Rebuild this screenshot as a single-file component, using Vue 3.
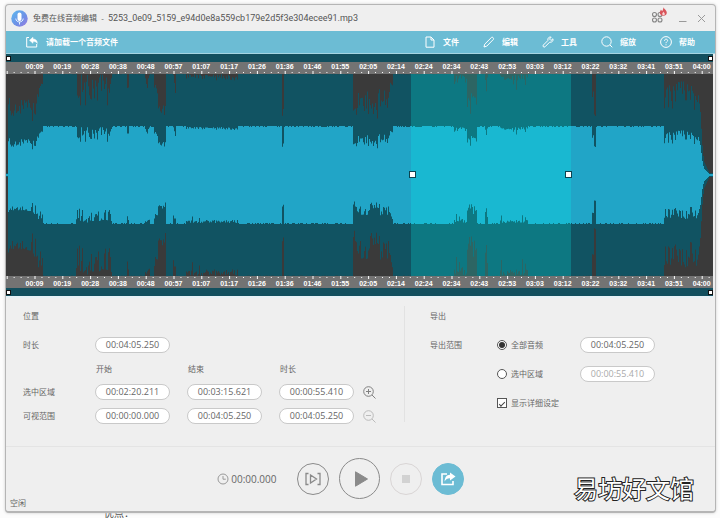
<script setup>
import { ref, reactive } from 'vue';

const fileName = ref('5253_0e09_5159_e94d0e8a559cb179e2d5f3e304ecee91.mp3');
const exportRange = ref('all');
const showDetails = ref(true);

const menu = [
  { icon: 'file', label: '文件' },
  { icon: 'edit', label: '编辑' },
  { icon: 'tool', label: '工具' },
  { icon: 'zoom', label: '缩放' },
  { icon: 'help', label: '帮助' },
];

const times = reactive({
  total: '00:04:05.250',
  selStart: '00:02:20.211',
  selEnd: '00:03:15.621',
  selLength: '00:00:55.410',
  viewStart: '00:00:00.000',
  viewEnd: '00:04:05.250',
  viewLength: '00:04:05.250',
  exportAll: '00:04:05.250',
  exportSel: '00:00:55.410',
});

// waveform size in drawing units
const W = 707;
const H = 202;
const MID = 101;
const BODY = 49;

const pct = (x) => (x / W) * 100 + '%';

// ruler
const labels = [
  '00:09', '00:19', '00:28', '00:38', '00:48', '00:57', '01:07', '01:17', '01:26',
  '01:36', '01:46', '01:55', '02:05', '02:14', '02:24', '02:34', '02:43', '02:53',
  '03:03', '03:12', '03:22', '03:32', '03:41', '03:51', '04:00',
].map((text, i) => ({ text, x: pct(28.5 + i * 27.8) }));

const ticks = [];
for (let i = 0; i < 102; i++) {
  ticks.push({ x: pct(0.7 + i * 6.95), major: i % 4 === 0 });
}

// quiet passages: [from, to, smallest dip, largest dip, density]
const quiet = [
  [0, 4, 12, 16, 1],
  [4, 16, 13, 22, 1],
  [16, 26, 13, 18, 1],
  [26, 32, 10, 24, 1],
  [32, 37, 5, 15, 1],
  [70, 80, 3, 16, 0.8],
  [80, 94, 3, 14, 0.7],
  [94, 106, 3, 18, 0.8],
  [121, 123, 4, 8, 0.6],
  [139, 144, 2, 15, 0.8],
  [148, 152, 5, 12, 1],
  [152, 160, 15, 23, 1],
  [167, 170, 5, 17, 0.8],
  [180, 206, 1, 9, 0.25],
  [206, 232, 1, 4, 0.2],
  [276, 278, 17, 22, 1],
  [347, 351, 17, 25, 1],
  [351, 364, 9, 20, 1],
  [364, 372, 14, 23, 1],
  [372, 384, 8, 20, 1],
  [384, 387, 5, 11, 1],
  [448, 461, 1, 10, 0.6],
  [461, 471, 10, 20, 1],
  [479, 482, 6, 17, 0.9],
  [494, 522, 1, 9, 0.25],
  [586, 588, 8, 14, 1],
  [588, 590, 20, 27, 1],
  [658, 670, 6, 18, 1],
  [670, 678, 4, 14, 1],
  [678, 692, 5, 18, 1],
];

const fade = [38, 34, 30, 22, 14, 9, 6, 5, 4, 3, 2, 1, 1, 1, 1];
const fadeStart = W - fade.length;

const makeEnvelope = (seed) => {
  let s = seed;
  const rand = () => {
    s = (s * 16807) % 2147483647;
    return s / 2147483647;
  };
  const env = [];
  for (let x = 0; x < W; x++) {
    if (x < 2) { rand(); env.push(1); continue; }
    if (x >= fadeStart) { env.push(fade[x - fadeStart]); continue; }
    const part = quiet.find((q) => x >= q[0] && x < q[1]);
    let dip = rand() < 0.3 ? 1 : 0;
    if (part && rand() < part[4]) {
      dip = part[2] + (part[3] - part[2]) * Math.pow(rand(), 1.3);
    } else if (part) {
      dip = 1 + rand() * 3;
    }
    env.push(BODY - dip);
  }
  return env;
};

const upper = makeEnvelope(4711);
const lower = makeEnvelope(9203);

const toPath = (gain) => {
  const amp = (v) => Math.min(v * gain, MID + 2);
  let d = `M0 ${MID}`;
  upper.forEach((v, x) => { d += `V${(MID - amp(v)).toFixed(1)}H${x + 1}`; });
  for (let x = W - 1; x >= 0; x--) {
    d += `V${(MID + amp(lower[x])).toFixed(1)}H${x}`;
  }
  return d + 'Z';
};

const bodyPath = toPath(1);
const peakPath = toPath(2.1);
</script>

<template>
  <main class="page">
    <div class="window">
      <header class="titlebar">
        <svg class="logo" viewBox="0 0 17 17">
          <defs>
            <linearGradient id="logoFill" x1="0" y1="0" x2="1" y2="1">
              <stop offset="0" stop-color="#5cb9ee" />
              <stop offset="0.6" stop-color="#6f8fe6" />
              <stop offset="1" stop-color="#9a7be0" />
            </linearGradient>
          </defs>
          <circle cx="8.500" cy="8.500" r="8.200" fill="url(#logoFill)" />
          <rect x="6.500" y="2.500" width="4" height="8.500" rx="2" fill="#fff" />
          <path d="M4.800 8.500c0 4.600 7.400 4.600 7.400 0M8.500 12v2.500" fill="none" stroke="#e4f1ff" stroke-width="1" />
        </svg>
        <h1>免费在线音频编辑 &nbsp;-&nbsp; <span>{{ fileName }}</span></h1>
        <div class="win-buttons">
          <button aria-label="apps">
            <svg class="apps" viewBox="0 0 17 17">
              <g fill="none" stroke="#858585" stroke-width="1.100">
                <circle cx="3.500" cy="8.500" r="2" /><circle cx="9" cy="8.500" r="2" />
                <circle cx="3.500" cy="14" r="2" /><circle cx="9" cy="14" r="2" />
              </g>
              <path d="M12.300 1c.5 1.800 3.500 3 3.500 5.700 0 2-1.500 3-3.400 3S8.800 8.500 8.800 6.800c0-1.300.8-2 1-3 .8.400 1 .9 1.200 1.500C11.900 4.200 12.600 2.600 12.300 1z" fill="#d9545a" />
              <path d="M12.500 5.500c.2 1 1.300 1.300 1.300 2.500 0 .8-.6 1.200-1.300 1.200s-1.300-.4-1.300-1.200c0-.9.900-1.300 1.300-2.500z" fill="#f6d5d5" />
            </svg>
          </button>
          <button aria-label="minimize">
            <svg class="small" viewBox="0 0 9 9"><path d="M1 7.500h7.500" stroke="#999" stroke-width="1" /></svg>
          </button>
          <button aria-label="close">
            <svg class="small" viewBox="0 0 9 9"><path d="M1 1l7 7M8 1l-7 7" stroke="#999" stroke-width="1" /></svg>
          </button>
        </div>
      </header>

      <nav class="menubar">
        <button class="load">
          <svg class="icon" viewBox="0 0 12 12">
            <path d="M3 1.500H.7v9.500h10V8" />
            <path d="M3.500 4.300L7 1.300v1.700c2.800.1 4.300 1.500 4.300 4.400C10.300 5.900 9 5.500 7 5.600v1.700z" fill="#fff" stroke-width="0.500" />
          </svg>
          请加载一个音频文件
        </button>
        <button v-for="item in menu" :key="item.icon">
          <svg class="icon" viewBox="0 0 12 12">
            <path v-if="item.icon === 'file'" d="M2 1h5l3 3v7.200H2zM7 1v3h3" />
            <path v-else-if="item.icon === 'edit'" d="M1 11l.7-2.800L8.500 1.400c.9-.8 2.700.8 1.900 2L3.700 10.200z" />
            <path v-else-if="item.icon === 'tool'" d="M10.900 2.800L9 4.500 7.500 3 9.200 1.100C7.400.5 5.300 2 5.900 4.500L1.300 9.100c-1 1.200.6 2.700 1.700 1.700l4.600-4.600c2.400.5 4-1.500 3.300-3.400z" />
            <template v-else-if="item.icon === 'zoom'">
              <circle cx="5.500" cy="5.500" r="4.700" />
              <path d="M9 9l2.300 2.300" />
            </template>
            <template v-else>
              <circle cx="6" cy="6" r="5.400" />
              <path d="M4.500 4.800c0-2.200 3.200-2.100 3.100-.2C7.500 5.800 6 5.900 6 7.200M6 8.300v1" />
            </template>
          </svg>
          {{ item.label }}
        </button>
      </nav>

      <section class="editor">
        <div class="strip"><i></i><i></i></div>
        <svg class="ruler">
          <text v-for="l in labels" :key="l.text" :x="l.x" y="7">{{ l.text }}</text>
          <rect v-for="(t, i) in ticks" :key="i" :x="t.x" :y="t.major ? 9 : 10" width="1" :height="t.major ? 3 : 1" />
        </svg>
        <svg class="wave">
          <svg :viewBox="`0 0 ${W} ${H}`" preserveAspectRatio="none" width="100%" height="100%">
            <path :d="peakPath" fill="#115362" />
            <path :d="bodyPath" fill="#21a5c7" />
            <rect x="405" y="0" width="160" :height="H" fill="#00fff5" fill-opacity="0.220" />
          </svg>
          <g fill="#fff" stroke="#0c4450">
            <svg :x="pct(403)" y="97" width="7" height="7"><rect x="0.500" y="0.500" width="6" height="6" /></svg>
            <svg :x="pct(559)" y="97" width="7" height="7"><rect x="0.500" y="0.500" width="6" height="6" /></svg>
          </g>
        </svg>
        <svg class="ruler">
          <text v-for="l in labels" :key="l.text" :x="l.x" y="10">{{ l.text }}</text>
          <rect v-for="(t, i) in ticks" :key="i" :x="t.x" :y="t.major ? 0 : 1" width="1" :height="t.major ? 3 : 1" />
        </svg>
        <div class="strip"><i></i><i></i></div>
      </section>

      <section class="panels">
        <div class="position">
          <h2>位置</h2>
          <label for="total">时长</label>
          <input id="total" class="time" v-model="times.total" />
          <span class="col first">开始</span>
          <span class="col">结束</span>
          <span class="col">时长</span>
          <label class="row" for="selStart">选中区域</label>
          <input id="selStart" class="time" v-model="times.selStart" />
          <input class="time" aria-label="选中区域 结束" v-model="times.selEnd" />
          <input class="time" aria-label="选中区域 时长" v-model="times.selLength" />
          <button aria-label="zoom in">
            <svg class="lens" viewBox="0 0 13 13"><circle cx="5.500" cy="5.500" r="4.800" /><path d="M9 9l3.500 3.500M3 5.500h5M5.500 3v5" /></svg>
          </button>
          <label class="row" for="viewStart">可视范围</label>
          <input id="viewStart" class="time" v-model="times.viewStart" />
          <input class="time" aria-label="可视范围 结束" v-model="times.viewEnd" />
          <input class="time" aria-label="可视范围 时长" v-model="times.viewLength" />
          <button aria-label="zoom out" disabled>
            <svg class="lens" viewBox="0 0 13 13"><circle cx="5.500" cy="5.500" r="4.800" /><path d="M9 9l3.500 3.500M3 5.500h5" /></svg>
          </button>
        </div>

        <div class="export">
          <h2>导出</h2>
          <span>导出范围</span>
          <label class="option"><input type="radio" value="all" v-model="exportRange" />全部音频</label>
          <input class="time" aria-label="全部音频" v-model="times.exportAll" />
          <label class="option second"><input type="radio" value="selection" v-model="exportRange" />选中区域</label>
          <input class="time" aria-label="选中区域" v-model="times.exportSel" disabled />
          <label class="option second"><input type="checkbox" v-model="showDetails" />显示详细设定</label>
        </div>
      </section>

      <footer class="player">
        <div class="side left">
          <div class="clock">
            <svg viewBox="0 0 12 12"><circle cx="6" cy="6" r="5" /><path d="M6 3v3.200h2.800" /></svg>
            <span>00:00.000</span>
          </div>
          <button class="round" aria-label="play selection">
            <svg viewBox="0 0 16 16" fill="none" stroke="#8a8a8a" stroke-width="1.300">
              <path d="M3.500 2.500H1v11h2.500M12.500 2.500H15v11h-2.500M5.500 4v8l6-4z" />
            </svg>
          </button>
        </div>
        <button class="round big" aria-label="play">
          <svg viewBox="0 0 16 16"><path d="M2.500.8L14.500 8l-12 7.200z" fill="#8a8a8a" stroke="#8a8a8a" stroke-linejoin="round" /></svg>
        </button>
        <div class="side">
          <button class="round" aria-label="stop" disabled>
            <svg viewBox="0 0 16 16"><rect x="4" y="4" width="8" height="8" fill="#d2d2d2" /></svg>
          </button>
          <button class="round share" aria-label="export">
            <svg viewBox="0 0 16 16">
              <path d="M7 3H2v10.500h11V10" fill="none" stroke="#fff" stroke-width="1.600" />
              <path d="M10 1.500L15.500 5.500 10 9.500V7.300C7.600 7.200 6 8 4.600 10.500 4.800 6.300 6.500 4 10 3.800z" fill="#fff" />
            </svg>
          </button>
        </div>
      </footer>
      <p class="status">空闲</p>
      <div class="watermark">易坊好文馆</div>
    </div>
    <p class="article">优点：</p>
  </main>
</template>

<style>
html, body {
  background: #fcfcfc;
  overflow: hidden;
}
</style>

<style scoped>
.page {
  padding: 4px 4px 0 5px;
  font-family: 'Open Sans', 'Noto Sans CJK SC', sans-serif;
  font-size: 8px;
  line-height: 16px;
  color: #666;
}
h1, h2, p { margin: 0; font-size: inherit; font-weight: normal; }
svg { display: block; }
button {
  display: flex; align-items: center; justify-content: center;
  padding: 0; border: none; background: none; color: inherit; font: inherit; cursor: pointer;
}
button:disabled { cursor: default; }

.window {
  position: relative;
  z-index: 1;
  background: #efefef;
  border: 1px solid #b5b5b5;
  border-bottom: 2px solid #b5b5b5;
  border-radius: 4px;
  box-shadow: 0 0 3px #ccc;
}

.titlebar { display: flex; align-items: center; gap: 5px; height: 26px; padding: 0 9px 0 5px; }
.logo { width: 17px; height: 17px; }
.titlebar h1 { flex: 1; color: #555; white-space: nowrap; }
.titlebar h1 span { font-family: Roboto, sans-serif; font-size: 9px; }
.win-buttons { display: flex; align-items: center; gap: 10px; }
.apps { width: 17px; height: 17px; margin-bottom: 8px; }
.small { width: 9px; height: 9px; }

.menubar {
  display: flex; align-items: center; gap: 24px;
  height: 22px; padding: 0 20px;
  background: #6cbcd4; border-bottom: 1px solid #a5d5e2;
  color: #fff; font-weight: bold;
}
.menubar button { gap: 7px; }
.menubar .load { margin-right: auto; gap: 8px; }
.icon { width: 12px; height: 12px; fill: none; stroke: #fff; stroke-width: 1; }

.editor { margin-right: 2px; border-bottom: 2px solid #e6f1f6; }
.strip {
  display: flex; justify-content: space-between; align-items: center;
  height: 8px; background: #124f5e;
}
.strip i { width: 3px; height: 3px; background: #fff; border: 1px solid #111; }
.ruler {
  width: 100%; height: 12px;
  background: #737373; fill: #fff; overflow: hidden;
  font: bold 7px 'Liberation Sans', Arial, sans-serif;
  text-anchor: middle;
}
.wave { width: 100%; height: 202px; background: #3a3a3a; }

.panels { display: flex; padding: 8px 17px 24px; border-bottom: 1px solid #e4e4e4; }
.position, .export { display: grid; align-items: center; align-content: start; }
.position {
  grid-template-columns: 72px 92px 92px 83px 14px;
  grid-template-rows: 20px 38px 10px 36px 12px;
  padding-right: 28px;
  border-right: 1px solid #e2e2e2;
}
h2 { grid-column: 1 / -1; }
#total { grid-column: 2 / -1; }
.first { grid-column: 2; }
.row { grid-column: 1; }
.col { padding-left: 1px; }
.export {
  grid-template-columns: 67px 83px 75px;
  grid-template-rows: 20px 38px 20px 38px;
  padding-left: 25px;
}
.time {
  box-sizing: border-box;
  width: 75px; height: 16px; padding: 0;
  border: 1px solid #c9c9c9; border-radius: 8px; background: #fff;
  color: #666; font: inherit; font-size: 9px; text-align: center;
}
.time:disabled { color: #aaa; }
.lens { width: 13px; height: 13px; fill: none; stroke: #808080; stroke-width: 1; }
button:disabled .lens { stroke: #bbb; }

.option { display: flex; align-items: center; gap: 4px; white-space: nowrap; }
.second { grid-column: 2; }
.option input {
  appearance: none;
  display: grid; place-items: center;
  box-sizing: border-box; width: 10px; height: 10px; margin: 0;
  border: 1px solid #555; background: #fff;
}
.option input[type='radio'] { border-radius: 50%; }
.option input[type='radio']:checked::after {
  content: ''; width: 6px; height: 6px; border-radius: 50%; background: #333;
}
.option input[type='checkbox']:checked::after {
  content: ''; width: 5px; height: 2px;
  border: solid #444; border-width: 0 0 1px 1px; transform: rotate(-45deg);
}

.player {
  display: grid; grid-template-columns: 1fr auto 1fr; align-items: center; gap: 10px;
  padding: 11px 3px 0 0;
}
.side { display: flex; align-items: center; gap: 10px; }
.left { justify-content: flex-end; gap: 20px; }
.clock { display: flex; align-items: center; gap: 2px; font-size: 10px; }
.clock svg { width: 12px; height: 12px; fill: none; stroke: #999; }
.round {
  box-sizing: border-box; width: 32px; height: 32px;
  border: 1px solid #8a8a8a; border-radius: 50%;
}
.round svg { width: 16px; height: 16px; }
.big { width: 41px; height: 41px; }
.big svg { margin-left: 3px; }
.round:disabled { border-color: #d9d5d5; }
.share { background: #6cbcd4; border-color: #6cbcd4; }
.status { padding: 0 4px; margin-top: -4px; }

.watermark {
  position: absolute; right: 21px; bottom: 5px;
  font: 24px/36px 'Noto Sans CJK SC', sans-serif;
  color: #fff; -webkit-text-stroke: 2px #222; paint-order: stroke fill;
}
.article { margin: -8px 0 0 99px; font-size: 10px; color: #444; }
</style>
